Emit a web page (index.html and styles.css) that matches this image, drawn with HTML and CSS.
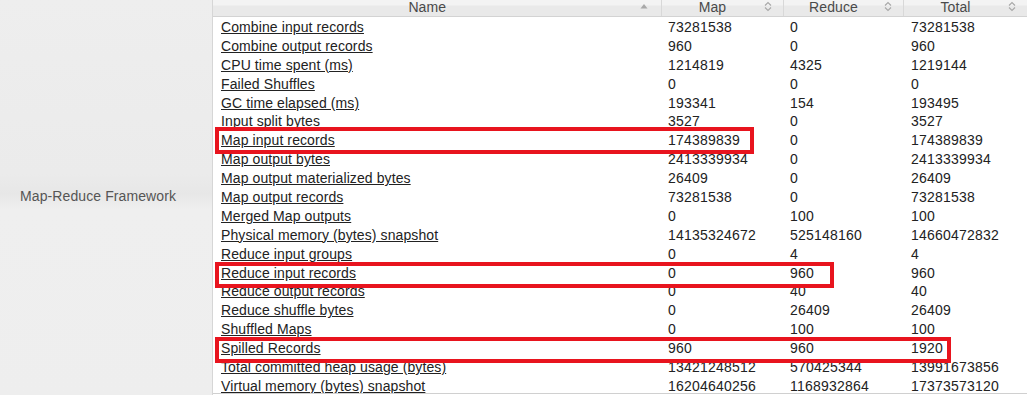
FILE: index.html
```html
<!DOCTYPE html>
<html>
<head>
<meta charset="utf-8">
<link rel="stylesheet" href="styles.css">
</head>
<body>
<div class="page">
  <div class="group">Map-Reduce Framework</div>
  <div class="counters">
    <table class="grid">
      <colgroup>
        <col class="c-name"><col class="c-map"><col class="c-red"><col class="c-tot">
      </colgroup>
      <thead>
        <tr>
          <th><span class="lbl">Name</span><svg class="sort" width="8" height="6" viewBox="0 0 8 6"><path d="M0.5 5.5 L4 1 L7.5 5.5 Z" fill="#a8a8a8"/></svg></th>
          <th><span class="lbl">Map</span><svg class="sort" width="8" height="11" viewBox="0 0 8 11"><path d="M1 4.5 L4 1.5 L7 4.5 M1 6.5 L4 9.5 L7 6.5" fill="none" stroke="#a8a8a8" stroke-width="1.1"/></svg></th>
          <th><span class="lbl">Reduce</span><svg class="sort" width="8" height="11" viewBox="0 0 8 11"><path d="M1 4.5 L4 1.5 L7 4.5 M1 6.5 L4 9.5 L7 6.5" fill="none" stroke="#a8a8a8" stroke-width="1.1"/></svg></th>
          <th><span class="lbl">Total</span><svg class="sort" width="8" height="11" viewBox="0 0 8 11"><path d="M1 4.5 L4 1.5 L7 4.5 M1 6.5 L4 9.5 L7 6.5" fill="none" stroke="#a8a8a8" stroke-width="1.1"/></svg></th>
        </tr>
      </thead>
      <tbody>
        <tr><td><a href="#">Combine input records</a></td><td>73281538</td><td>0</td><td>73281538</td></tr>
        <tr><td><a href="#">Combine output records</a></td><td>960</td><td>0</td><td>960</td></tr>
        <tr><td><a href="#">CPU time spent (ms)</a></td><td>1214819</td><td>4325</td><td>1219144</td></tr>
        <tr><td><a href="#">Failed Shuffles</a></td><td>0</td><td>0</td><td>0</td></tr>
        <tr><td><a href="#">GC time elapsed (ms)</a></td><td>193341</td><td>154</td><td>193495</td></tr>
        <tr><td><a href="#">Input split bytes</a></td><td>3527</td><td>0</td><td>3527</td></tr>
        <tr><td><a href="#">Map input records</a></td><td>174389839</td><td>0</td><td>174389839</td></tr>
        <tr><td><a href="#">Map output bytes</a></td><td>2413339934</td><td>0</td><td>2413339934</td></tr>
        <tr><td><a href="#">Map output materialized bytes</a></td><td>26409</td><td>0</td><td>26409</td></tr>
        <tr><td><a href="#">Map output records</a></td><td>73281538</td><td>0</td><td>73281538</td></tr>
        <tr><td><a href="#">Merged Map outputs</a></td><td>0</td><td>100</td><td>100</td></tr>
        <tr><td><a href="#">Physical memory (bytes) snapshot</a></td><td>14135324672</td><td>525148160</td><td>14660472832</td></tr>
        <tr><td><a href="#">Reduce input groups</a></td><td>0</td><td>4</td><td>4</td></tr>
        <tr><td><a href="#">Reduce input records</a></td><td>0</td><td>960</td><td>960</td></tr>
        <tr><td><a href="#">Reduce output records</a></td><td>0</td><td>40</td><td>40</td></tr>
        <tr><td><a href="#">Reduce shuffle bytes</a></td><td>0</td><td>26409</td><td>26409</td></tr>
        <tr><td><a href="#">Shuffled Maps</a></td><td>0</td><td>100</td><td>100</td></tr>
        <tr><td><a href="#">Spilled Records</a></td><td>960</td><td>960</td><td>1920</td></tr>
        <tr><td><a href="#">Total committed heap usage (bytes)</a></td><td>13421248512</td><td>570425344</td><td>13991673856</td></tr>
        <tr><td><a href="#">Virtual memory (bytes) snapshot</a></td><td>16204640256</td><td>1168932864</td><td>17373573120</td></tr>
      </tbody>
    </table>
  </div>
  <div class="mark mark-1"></div>
  <div class="mark mark-2"></div>
  <div class="mark mark-3"></div>
</div>
</body>
</html>
```
FILE: styles.css
```css
html, body {
  margin: 0;
  padding: 0;
  background: #ffffff;
}
body {
  font-family: "Liberation Sans", Arial, sans-serif;
  font-size: 14px;
  letter-spacing: 0.1px;
  color: #222222;
  overflow: hidden;
}
.page {
  position: relative;
  display: flex;
  width: 1027px;
  height: 395px;
  overflow: hidden;
}
.group {
  flex: 0 0 213px;
  box-sizing: border-box;
  border-right: 1px solid #d6d6d6;
  display: flex;
  align-items: center;
  padding-left: 20px;
  padding-bottom: 3px;
  color: #555555;
  background: linear-gradient(to bottom, #eeeeee 0%, #ebebeb 44%, #e7e7e7 49%, #efefef 53%, #eeeeee 100%);
}
.counters {
  flex: 1 1 auto;
  height: 393px;
  overflow: hidden;
  border-bottom: 1px solid #d0d0d0;
}
.grid {
  table-layout: fixed;
  border-collapse: collapse;
  width: 814px;
}
.c-name { width: 448px; }
.c-map { width: 122px; }
.c-red { width: 120px; }
.c-tot { width: 124px; }
.grid th {
  height: 16px;
  padding: 0 19px 0 0;
  position: relative;
  font-weight: normal;
  color: #4a4a4a;
  line-height: 14px;
  vertical-align: top;
  text-align: center;
  background: linear-gradient(to bottom, #f3f3f3 0px, #f3f3f3 5px, #e9e9e9 6px, #e9e9e9 16px);
  border-right: 1px solid #d8d8d8;
  border-bottom: 1px solid #d3d3d3;
}
.grid th .lbl {
  display: inline-block;
  margin-top: -2px;
}
.grid th .sort {
  position: absolute;
  right: 11px;
  top: 1px;
}
.grid th:first-child .sort {
  top: 3px;
  right: 13px;
}
.grid td {
  height: 17.9px;
  padding: 1px 0 0 8px;
  line-height: 16px;
  vertical-align: middle;
  white-space: nowrap;
  overflow: hidden;
}
.grid td:nth-child(n+2) {
  letter-spacing: 0.22px;
}
.grid td:nth-child(2),
.grid td:nth-child(3) {
  padding-left: 7px;
}
.grid td a {
  color: #222222;
  text-decoration: underline;
}
.mark {
  position: absolute;
  box-sizing: border-box;
  border: 4px solid #e8141e;
  left: 215px;
}
.mark-1 { top: 127px; width: 539px; height: 27px; }
.mark-2 { top: 262px; width: 619px; height: 26px; }
.mark-3 { top: 337px; width: 736px; height: 26px; }
```
